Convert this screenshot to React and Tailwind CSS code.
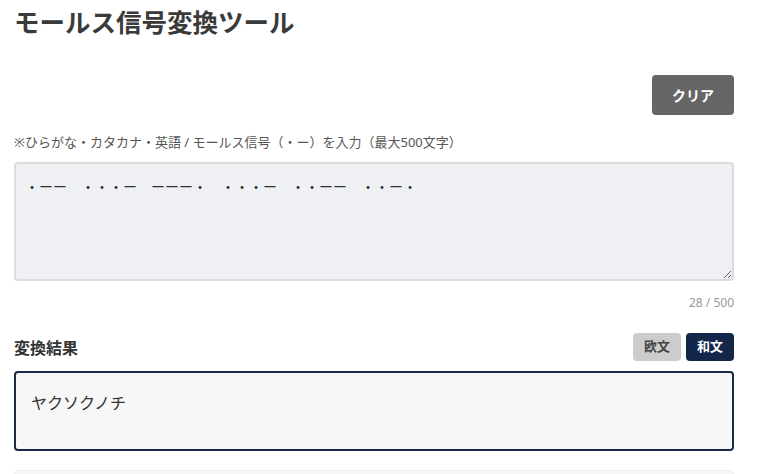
import React, { useState } from "react";

const jp = { fontFamily: '"Noto Sans", "Noto Sans CJK JP", sans-serif' };
const morseFont = { fontFamily: '"Noto Sans CJK JP", monospace' };

export default function App() {
    const [input, setInput] = useState("・ーー　・・・ー　ーーー・　・・・ー　・・ーー　・・ー・");
    const [mode, setMode] = useState("wabun");

    return (
        <div className="w-[770px] h-[474px] overflow-hidden bg-white text-[#333]" style={jp}>
            <div className="w-[720px] ml-[14px] pt-[2px]">
                <h1 className="text-[25.5px] leading-[40px] font-bold text-[#3a3a3a]">
                    モールス信号変換ツール
                </h1>

                {/* クリア */}
                <div className="flex justify-end mt-[33px]">
                    <button
                        onClick={() => setInput("")}
                        className="w-[82px] h-[40px] rounded bg-[#666666] text-white text-[14px] font-bold"
                    >
                        クリア
                    </button>
                </div>

                <p className="mt-[17px] text-[13px] leading-[20px] text-[#555]">
                    ※ひらがな・カタカナ・英語 / モールス信号（・ー）を入力（最大500文字）
                </p>

                <textarea
                    value={input}
                    onChange={(e) => setInput(e.target.value)}
                    maxLength={500}
                    className="block w-full h-[119px] mt-[10px] rounded border-2 border-[#dcdcdc] bg-[#eff0f4] pl-[9px] pr-[14px] pt-[12px] text-[14px] leading-[21px] text-[#333] outline-none"
                    style={morseFont}
                />

                <div className="text-right text-[12px] leading-[18px] text-[#999] mt-[13px]">
                    {input.length} / 500
                </div>

                {/* 変換結果 */}
                <div className="flex items-end justify-between mt-[21px]">
                    <h2 className="text-[16px] leading-[24px] font-bold text-[#333] mb-[1px]">変換結果</h2>
                    <div className="flex gap-[5px]">
                        <button
                            onClick={() => setMode("obun")}
                            className={`w-[48px] h-[28px] rounded text-[13px] font-bold ${mode === "obun"
                                ? "bg-[#14264a] text-white"
                                : "bg-[#cccccc] text-[#444]"
                                }`}
                        >
                            欧文
                        </button>
                        <button
                            onClick={() => setMode("wabun")}
                            className={`w-[48px] h-[28px] rounded text-[13px] font-bold ${mode === "wabun"
                                ? "bg-[#14264a] text-white"
                                : "bg-[#cccccc] text-[#444]"
                                }`}
                        >
                            和文
                        </button>
                    </div>
                </div>

                <div className="mt-[10px] h-[80px] rounded border-2 border-[#1b2a47] bg-[#f7f7f7] px-[15px] pt-[18px] text-[16px] leading-[24px] text-[#333]">
                    ヤクソクノチ
                </div>

                <div className="mt-[19px] h-[60px] rounded border border-[#eeeeee] bg-[#f7f7f7]"></div>
            </div>
        </div>
    );
}
